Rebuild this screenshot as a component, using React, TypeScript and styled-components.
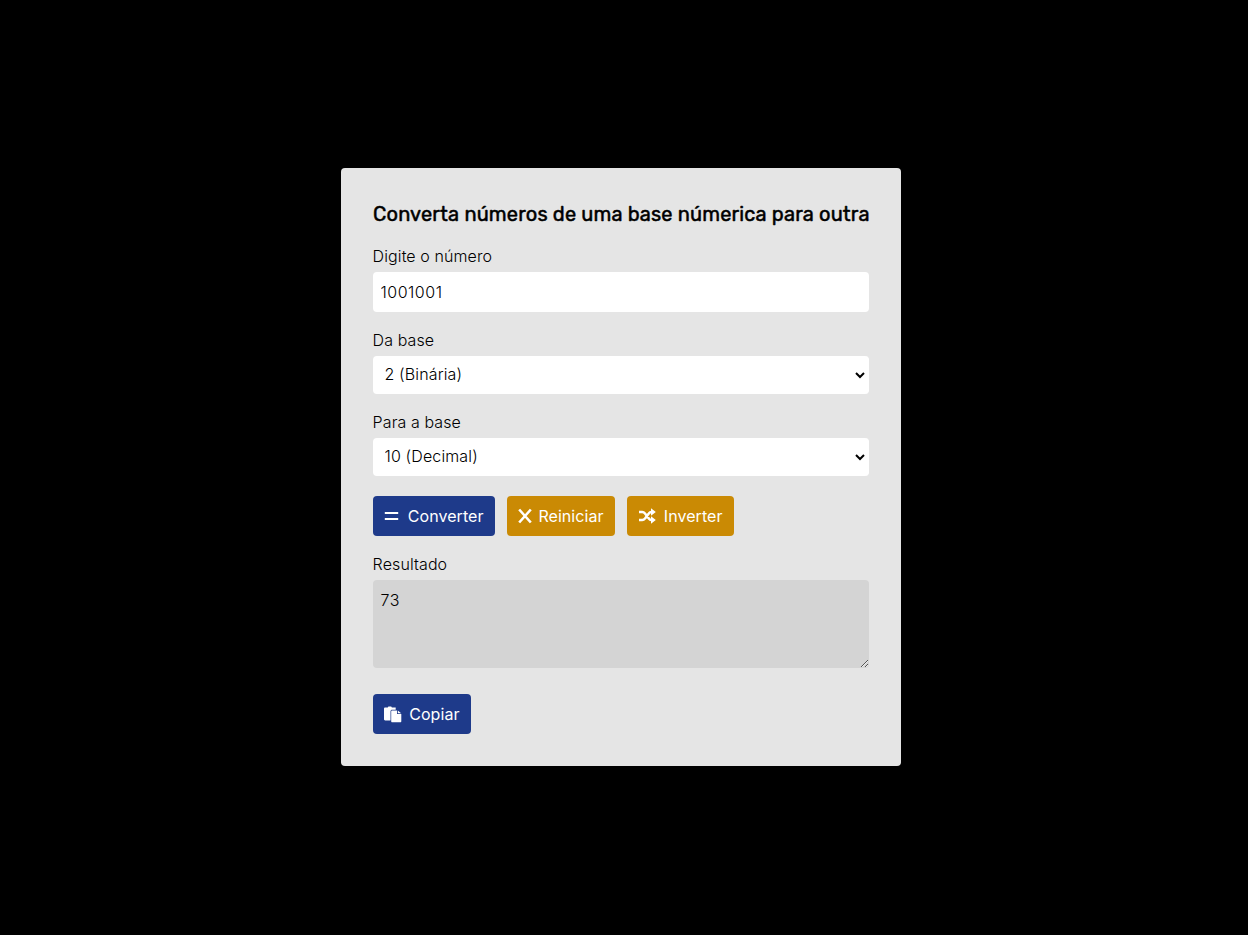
import React from "react";
import styled, { createGlobalStyle } from "styled-components";

const GlobalStyle = createGlobalStyle`
  *, *::before, *::after { box-sizing: border-box; }
  body { margin: 0; background: #000; color: #000; }
  body, input, select, textarea, button {
    font-family: Inter, "Liberation Sans", sans-serif;
    font-size: 16px;
    line-height: 24px;
    font-weight: 300;
  }
`;

const Page = styled.main`
  min-height: 100vh;
  display: flex;
  align-items: center;
  justify-content: center;
  padding: 0 6px 1px 0;
`;

const Card = styled.form`
  width: 560px;
  height: 598px;
  padding: 32px;
  border-radius: 4px;
  background: #e5e5e5;
  display: flex;
  flex-direction: column;
`;

const Title = styled.h1`
  margin: 0 0 16px;
  font-family: Rubik, Inter, sans-serif;
  font-size: 20px;
  font-weight: 400;
  line-height: 28px;
  letter-spacing: 0.165px;
  white-space: nowrap;
  -webkit-text-stroke: 0.5px #000;
`;

const Field = styled.div<{ $gap?: number }>`
  display: flex;
  flex-direction: column;
  gap: 4px;
  margin-bottom: ${(p) => p.$gap ?? 16}px;
`;

const Label = styled.label`
  letter-spacing: 0.1px;
  margin-left: -0.4px;
`;

const Input = styled.input`
  height: 40px;
  padding: 8px 7.5px;
  border: 0;
  border-radius: 4px;
  background: #fff;
  color: #000;
  letter-spacing: 0.5px;
`;

const Select = styled.select`
  height: 38px;
  padding: 7px 9px 9px 7.5px;
  border: 0;
  border-right: 1px solid #fff;
  border-radius: 4px;
  background: #fff;
  color: #000;
  letter-spacing: 0.13px;
`;

const Output = styled.textarea`
  height: 88px;
  padding: 8px 7.5px;
  border: 0;
  border-radius: 4px;
  background: #d4d4d4;
  color: #000;
  letter-spacing: 0.5px;
`;

const Actions = styled.div`
  display: flex;
  gap: 12px;
  margin: 4px 0 16px;
`;

const Button = styled.button<{ $tone: "blue" | "amber"; $width: number }>`
  width: ${(p) => p.$width}px;
  height: 40px;
  padding: 8px 11.5px 8px 11px;
  border: 0;
  border-radius: 4px;
  display: flex;
  align-items: center;
  justify-content: space-between;
  font-weight: 400;
  letter-spacing: 0.05px;
  color: #fff;
  background: ${(p) => (p.$tone === "blue" ? "#1e3a8a" : "#ca8a04")};
`;

const Icon = styled.svg`
  display: block;
  flex: none;
  fill: currentColor;
`;

const EqualsIcon = () => (
  <Icon width="15" height="16" viewBox="0 0 15 16">
    <path d="M.8 4h13.4v2H.8zM.8 10h13.4v2H.8z" />
  </Icon>
);

const CrossIcon = () => (
  <Icon width="14" height="16" viewBox="0 0 14 16">
    <path d="M1.2 1.5 12.8 14.5M12.8 1.5 1.2 14.5" fill="none" stroke="currentColor" strokeWidth="2.6" />
  </Icon>
);

const ShuffleIcon = () => (
  <Icon width="18" height="16" viewBox="0 0 18 16">
    <path
      d="M1 4h3.2c1.2 0 2 .5 2.8 1.5l3.8 5c.7 1 1.4 1.5 2.5 1.5H15M1 12h3.2c1.2 0 2-.5 2.8-1.5l3.8-5c.7-1 1.4-1.5 2.5-1.5H15"
      fill="none"
      stroke="currentColor"
      strokeWidth="2.5"
    />
    <path d="M13 .2 17.8 4 13 7.800zM13 8.200l4.800 3.800-4.800 3.800z" />
  </Icon>
);

const PasteIcon = () => (
  <Icon width="18" height="17" viewBox="0 0 18 17">
    <path d="M1.2 1.5h2.5L4.4.5h2.8l.7 1h3.8v2.2H8.2c-1 0-1.7.7-1.7 1.7v9H1.200c-.7 0-1.200-.5-1.200-1.200V2.700c0-.7.5-1.200 1.200-1.200z" />
    <path d="M8.200 4.500h4.800v3.500h4.300v7.300c0 .6-.4 1-1 1H8.200c-.6 0-1-.4-1-1V5.500c0-.6.4-1 1-1z" />
    <path d="M13.800 4.400 17.200 7.300h-3.400z" />
  </Icon>
);

export default function App() {
  return (
    <>
      <GlobalStyle />
      <Page>
        <Card onSubmit={(e) => e.preventDefault()}>
          <Title>Converta números de uma base númerica para outra</Title>
          <Field>
            <Label htmlFor="number">Digite o número</Label>
            <Input id="number" defaultValue="1001001" />
          </Field>
          <Field>
            <Label htmlFor="from">Da base</Label>
            <Select id="from" defaultValue="2">
              <option value="2">2 (Binária)</option>
              <option value="10">10 (Decimal)</option>
            </Select>
          </Field>
          <Field>
            <Label htmlFor="to">Para a base</Label>
            <Select id="to" defaultValue="10">
              <option value="2">2 (Binária)</option>
              <option value="10">10 (Decimal)</option>
            </Select>
          </Field>
          <Actions>
            <Button type="submit" $tone="blue" $width={122}><EqualsIcon />Converter</Button>
            <Button type="button" $tone="amber" $width={108}><CrossIcon />Reiniciar</Button>
            <Button type="button" $tone="amber" $width={107}><ShuffleIcon />Inverter</Button>
          </Actions>
          <Field $gap={26}>
            <Label htmlFor="result">Resultado</Label>
            <Output id="result" readOnly value="73" />
          </Field>
          <Button type="button" $tone="blue" $width={98}><PasteIcon />Copiar</Button>
        </Card>
      </Page>
    </>
  );
}
